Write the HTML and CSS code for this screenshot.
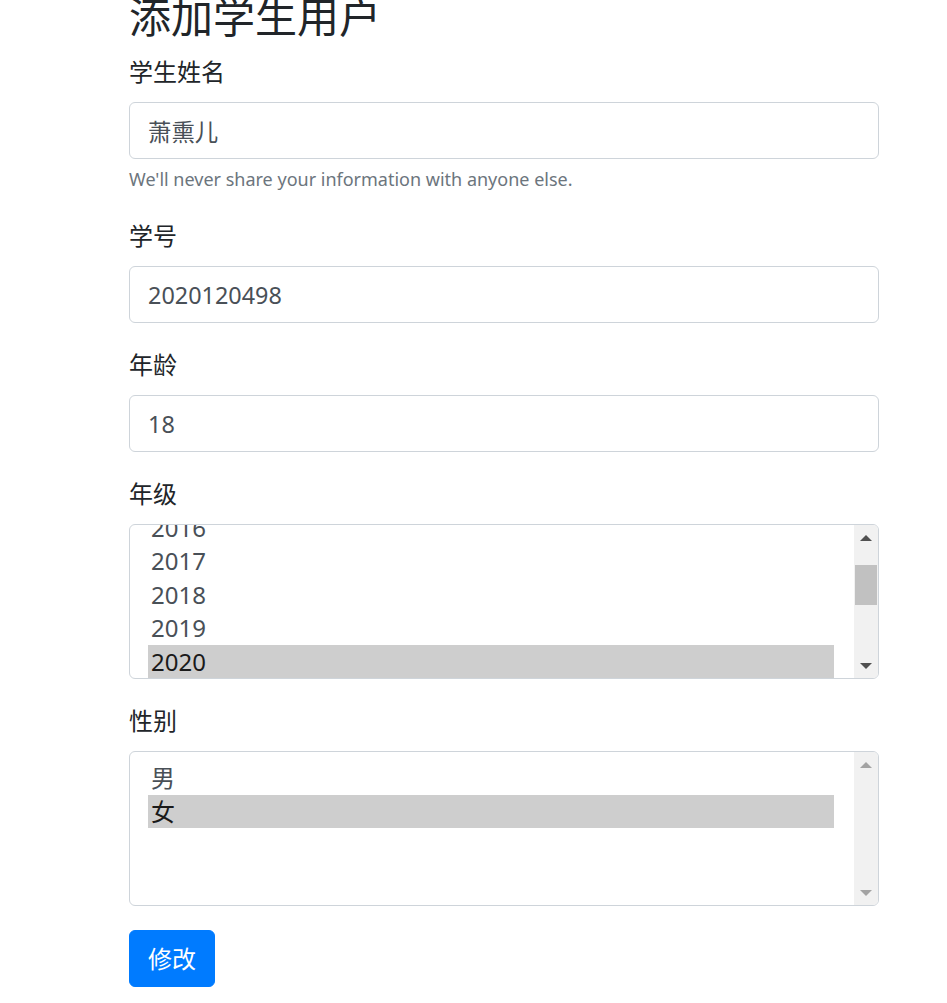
FILE: index.html
```html
<!DOCTYPE html>
<html lang="zh-CN">
<head>
<meta charset="utf-8">
<title>添加学生用户</title>
<link rel="stylesheet" href="styles.css">
</head>
<body>
<div class="container">
  <h3 class="title">添加学生用户</h3>
  <form class="form">
    <div class="form-group">
      <label class="label">学生姓名</label>
      <input class="form-control" type="text" value="萧熏儿" readonly>
      <small class="help">We'll never share your information with anyone else.</small>
    </div>
    <div class="form-group">
      <label class="label">学号</label>
      <input class="form-control" type="text" value="2020120498" readonly>
    </div>
    <div class="form-group">
      <label class="label">年龄</label>
      <input class="form-control" type="text" value="18" readonly>
    </div>
    <div class="form-group">
      <label class="label">年级</label>
      <div class="listbox" role="listbox">
        <div class="options options-bottom">
          <div class="option">2016</div>
          <div class="option">2017</div>
          <div class="option">2018</div>
          <div class="option">2019</div>
          <div class="option selected">2020</div>
        </div>
        <div class="scrollbar">
          <div class="sb-btn"><span class="arrow-up"></span></div>
          <div class="sb-track"><div class="sb-thumb"></div></div>
          <div class="sb-btn"><span class="arrow-down"></span></div>
        </div>
      </div>
    </div>
    <div class="form-group">
      <label class="label">性别</label>
      <div class="listbox" role="listbox">
        <div class="options options-top">
          <div class="option">男</div>
          <div class="option selected">女</div>
        </div>
        <div class="scrollbar disabled">
          <div class="sb-btn"><span class="arrow-up"></span></div>
          <div class="sb-track"></div>
          <div class="sb-btn"><span class="arrow-down"></span></div>
        </div>
      </div>
    </div>
    <button class="btn" type="button">修改</button>
  </form>
</div>
</body>
</html>
```

FILE: styles.css
```css
html, body {
  margin: 0;
  padding: 0;
  background: #fff;
}
body {
  font-family: "Noto Sans", "Noto Sans CJK SC", sans-serif;
  color: #212529;
  font-size: 24px;
  line-height: 1.5;
}
.container {
  width: 750px;
  margin: -8px 0 0 129px;
}
.title {
  font-size: 42px;
  font-weight: 400;
  line-height: 1.2;
  margin: 0 0 12px;
}
.form {
  margin: 0;
}
.form-group {
  margin-bottom: 24px;
  display: flex;
  flex-direction: column;
}
.label {
  display: block;
  margin-bottom: 12px;
  line-height: 36px;
}
.form-control {
  box-sizing: border-box;
  height: 57px;
  width: 100%;
  padding: 9px 18px;
  font: inherit;
  font-size: 23.4px;
  color: #495057;
  border: 1px solid #ced4da;
  border-radius: 6px;
  background: #fff;
  outline: none;
  margin: 0;
}
.help {
  display: block;
  margin-top: 6px;
  font-size: 18px;
  line-height: 28.8px;
  color: #6c757d;
}
.listbox {
  box-sizing: border-box;
  height: 155px;
  border: 1px solid #ced4da;
  border-radius: 6px;
  display: flex;
  overflow: hidden;
  background: #fff;
}
.options {
  flex: 1;
  display: flex;
  flex-direction: column;
  overflow: hidden;
  padding: 0 20px 0 18px;
}
.options-bottom {
  justify-content: flex-end;
}
.options-top {
  justify-content: flex-start;
  padding-top: 9px;
}
.option {
  flex: none;
  height: 33.5px;
  line-height: 33.5px;
  padding: 0 3px;
  color: #495057;
  font-size: 24px;
  white-space: nowrap;
}
.option.selected {
  background: #cecece;
  color: #1a1a1a;
}
.scrollbar {
  width: 24px;
  flex: none;
  background: #f1f1f1;
  display: flex;
  flex-direction: column;
}
.sb-btn {
  height: 25px;
  display: flex;
  align-items: center;
  justify-content: center;
  flex: none;
}
.sb-track {
  flex: 1;
  position: relative;
}
.sb-thumb {
  position: absolute;
  left: 1px;
  right: 1px;
  top: 15px;
  height: 40px;
  background: #c1c1c1;
}
.arrow-up {
  width: 0;
  height: 0;
  border-left: 6px solid transparent;
  border-right: 6px solid transparent;
  border-bottom: 6px solid #505050;
}
.arrow-down {
  width: 0;
  height: 0;
  border-left: 6px solid transparent;
  border-right: 6px solid transparent;
  border-top: 6px solid #505050;
}
.disabled .arrow-up {
  border-bottom-color: #a3a3a3;
}
.disabled .arrow-down {
  border-top-color: #a3a3a3;
}
.btn {
  box-sizing: border-box;
  height: 57px;
  padding: 9px 18px;
  font: inherit;
  font-size: 24px;
  line-height: 36px;
  color: #fff;
  background: #007bff;
  border: 1px solid #007bff;
  border-radius: 6px;
  cursor: pointer;
}
```
